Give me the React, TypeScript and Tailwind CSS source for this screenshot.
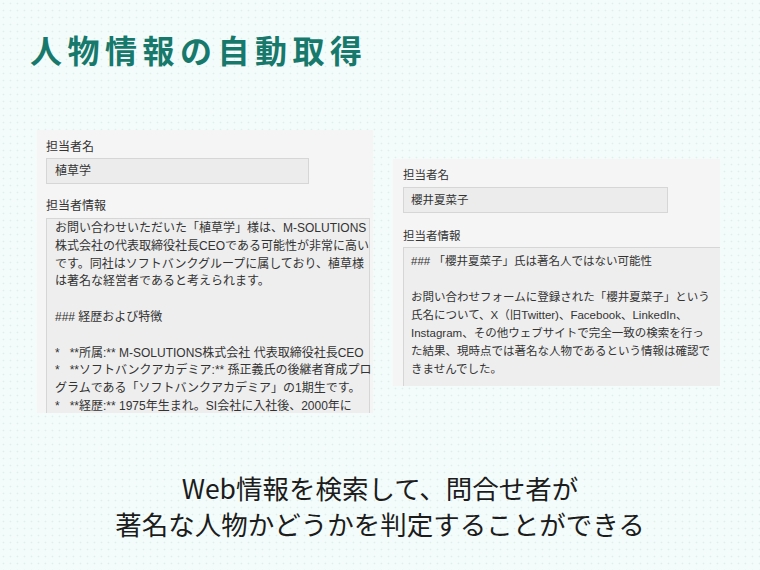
const leftInfo = [
  'お問い合わせいただいた「植草学」様は、M-SOLUTIONS',
  '株式会社の代表取締役社長CEOである可能性が非常に高い',
  'です。同社はソフトバンクグループに属しており、植草様',
  'は著名な経営者であると考えられます。',
  '',
  '### 経歴および特徴',
  '',
  '*   **所属:** M-SOLUTIONS株式会社 代表取締役社長CEO',
  '*   **ソフトバンクアカデミア:** 孫正義氏の後継者育成プロ',
  'グラムである「ソフトバンクアカデミア」の1期生です。',
  '*   **経歴:** 1975年生まれ。SI会社に入社後、2000年に',
];

const rightInfo = [
  '### 「櫻井夏菜子」氏は著名人ではない可能性',
  '',
  'お問い合わせフォームに登録された「櫻井夏菜子」という',
  '氏名について、X（旧Twitter)、Facebook、LinkedIn、',
  'Instagram、その他ウェブサイトで完全一致の検索を行っ',
  'た結果、現時点では著名な人物であるという情報は確認で',
  'きませんでした。',
];

export default function App() {
  return (
    <div className="relative w-[760px] h-[570px] overflow-hidden bg-[#f4fcfb] bg-[radial-gradient(circle,#dcf1ee_0.8px,transparent_1.1px)] bg-[length:7px_7px] font-['Noto_Sans_CJK_JP',sans-serif]">
      {/* Title */}
      <h1 className="mt-[29px] ml-[30px] text-[32px] leading-[40px] font-bold tracking-[5.5px] text-[#17796b]">
        人物情報の自動取得
      </h1>

      {/* Screenshots */}
      <div className="mt-[61px] pl-[37px] flex items-start gap-[20px] font-['Liberation_Sans','Noto_Sans_CJK_JP',sans-serif] text-[#333333]">
        {/* Left form */}
        <div className="w-[336px] h-[283px] overflow-hidden bg-[#f5f5f5] pl-[9px] pr-[3px]">
          <div className="pt-[9px] text-[12px] leading-[16px]">担当者名</div>
          <div className="mt-[3px] w-[263px] h-[26px] border border-[#d6d6d6] bg-[#ececec] pl-[8px] text-[12px] leading-[24px]">
            植草学
          </div>
          <div className="mt-[14px] text-[12px] leading-[16px]">担当者情報</div>
          <div className="mt-[4px] h-[200px] border border-[#d6d6d6] bg-[#eeeeee] pl-[8px] pt-[1px] text-[12px] leading-[17.8px] whitespace-pre">
            {leftInfo.map((l, i) => (
              <div key={i} className="h-[17.8px]">{l}</div>
            ))}
          </div>
        </div>

        {/* Right form */}
        <div className="mt-[29px] w-[327px] h-[227px] overflow-hidden bg-[#f5f5f5] pl-[10px]">
          <div className="pt-[8px] text-[11.5px] leading-[16px]">担当者名</div>
          <div className="mt-[4px] w-[265px] h-[26px] border border-[#d6d6d6] bg-[#ececec] pl-[7px] text-[11.5px] leading-[24px]">
            櫻井夏菜子
          </div>
          <div className="mt-[15px] text-[11.5px] leading-[16px]">担当者情報</div>
          <div className="mt-[3px] h-[160px] border-t border-l border-[#d6d6d6] bg-[#eeeeee] pl-[7px] pt-[4px] text-[11.5px] leading-[18px] whitespace-pre">
            {rightInfo.map((l, i) => (
              <div key={i} className="h-[18px]">{l}</div>
            ))}
          </div>
        </div>
      </div>

      {/* Caption */}
      <div className="mt-[57px] text-center text-[26.5px] leading-[36px] text-[#1c1c1c]">
        <div>Web情報を検索して、問合せ者が</div>
        <div>著名な人物かどうかを判定することができる</div>
      </div>
    </div>
  );
}
